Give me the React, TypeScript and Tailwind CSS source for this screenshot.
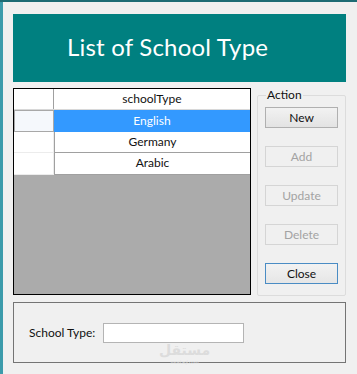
const rows = [
  { name: "English", selected: true },
  { name: "Germany", selected: false },
  { name: "Arabic", selected: false },
];

const actions = [
  { label: "New", disabled: false, isDefault: false },
  { label: "Add", disabled: true, isDefault: false },
  { label: "Update", disabled: true, isDefault: false },
  { label: "Delete", disabled: true, isDefault: false },
  { label: "Close", disabled: false, isDefault: true },
];

export default function App() {
  return (
    <div className="w-[357px] h-[374px] bg-[#f0f0f0] flex flex-col overflow-hidden font-['Lato',sans-serif] text-[12px] text-[#111]">
      {/* window frame top */}
      <div className="h-[2px] bg-[#1d6b74] shrink-0" />
      <div className="flex flex-1">
        {/* window frame left */}
        <div className="w-[3px] bg-[#3c9bab] shrink-0" />

        <div className="flex flex-col pl-[10px] pt-[12px] relative">
          {/* Header */}
          <div className="w-[333px] h-[68px] bg-[#008080] flex items-center pl-[54px]">
            <h1 className="text-white text-[24px] leading-none pb-[2px] tracking-[0.2px]">List of School Type</h1>
          </div>

          <div className="flex mt-[6px]">
            {/* Grid */}
            <div className="w-[238px] h-[207px] border border-black bg-[#ababab] flex flex-col">
              <div className="flex h-[21px] bg-white border-b border-[#d8d8d8]">
                <div className="w-[40px] border-r border-[#a0a0a0]" />
                <div className="flex-1 flex items-center justify-center">schoolType</div>
              </div>
              {rows.map((row) => (
                <div key={row.name} className="flex h-[21.5px]">
                  {row.selected ? (
                    <div className="w-[40px] bg-[#f5f8fc] border border-[#a8a8a8]" />
                  ) : (
                    <div className="w-[40px] bg-white border-r border-b border-[#ececec]" />
                  )}
                  <div
                    className={
                      row.selected
                        ? "flex-1 flex items-center justify-center bg-[#3399ff] text-white"
                        : "flex-1 flex items-center justify-center bg-white border-b border-[#a0a0a0] border-l border-l-[#a0a0a0]"
                    }
                  >
                    {row.name}
                  </div>
                </div>
              ))}
            </div>

            {/* Action group */}
            <fieldset className="ml-[6px] w-[89px] h-[208px] border border-[#dcdcdc] rounded-[2px] px-[7px] pb-[10px] flex flex-col">
              <legend className="ml-[1px] px-[1px] leading-[14px] text-[12px]">Action</legend>
              <div className="flex flex-col gap-[18px] mt-[5px]">
                {actions.map((a) => (
                  <button
                    key={a.label}
                    disabled={a.disabled}
                    className={
                      a.disabled
                        ? "w-[73px] h-[21px] border border-[#d5d5d5] bg-[#f0f0f0] text-[#a3a3a3] leading-none"
                        : a.isDefault
                        ? "w-[73px] h-[21px] border border-[#4a8cc4] bg-gradient-to-b from-[#f2f2f2] to-[#e6e6e6] leading-none"
                        : "w-[73px] h-[21px] border border-[#b0b0b0] bg-gradient-to-b from-[#f2f2f2] to-[#e3e3e3] leading-none"
                    }
                  >
                    {a.label}
                  </button>
                ))}
              </div>
            </fieldset>
          </div>

          {/* Bottom group */}
          <div className="mt-[6px] w-[333px] h-[61px] border border-[#747474] flex items-center pl-[15px] pt-[1px] relative">
            <label className="w-[74px]">School Type:</label>
            <input className="w-[141px] h-[20px] bg-white border border-[#b4b4b4] outline-none px-1" />
            {/* watermark */}
            <div className="absolute left-[145px] top-[41px] flex flex-col items-center gap-[3px] text-[#dcdcdc] pointer-events-none">
              <span className="text-[14px] leading-[13px] font-bold font-['DejaVu_Sans',sans-serif]">مستقل</span>
              <span className="text-[5px] leading-[5px] text-[#e4e4e4]">mostaql.com</span>
            </div>
          </div>
        </div>
      </div>
    </div>
  );
}
